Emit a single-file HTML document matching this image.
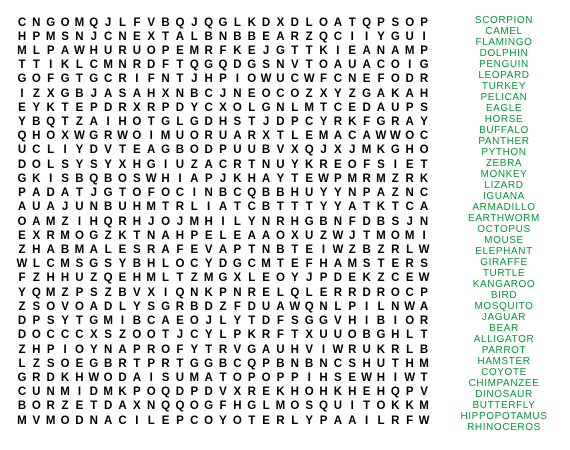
<!DOCTYPE html><html><head><style>
body{margin:0;width:570px;height:450px;background:#fff;position:relative;overflow:hidden;font-family:"Liberation Sans",Arial,sans-serif}
#g{position:absolute;left:14.8px;top:15.5px}
.r{display:flex;height:14.23px;line-height:14.23px}
.r span{width:14.36px;text-align:center;font-weight:bold;font-size:11.5px;color:#000}
#w{position:absolute;left:454px;width:100px;top:14.5px;text-align:center;color:#009933;font-size:10px;letter-spacing:0.6px}
#w div{height:11px;line-height:11px}
</style></head><body>
<div id="g"></div>
<div id="w"></div>
<script>
var rows="CNGOMQJLFVBQJQGLKDXDLOATQPSOP HPMSNJCNEXTALBNBBEARZQCIIYGUI MLPAWHURUOPEMRFKEJGTTKIEANAMP TTIKLCMNRDFTQGQDGSNVTOAUACOIG GOFGTGCRIFNTJHPIOWUCWFCNEFODR IZXGBJASAHXNBCJNEOCOZXYZGAKAH EYKTEPDRXRPDYCXOLGNLMTCEDAUPS YBQTZAIHOTGLGDHSTJDPCYRKFGRAY QHOXWGRWOIMUORUARXTLEMACAWWOC UCLIYDVTEAGBODPUUBVXQJXJMKGHO DOLSYSYXHGIUZACRTNUYKREOFSIET GKISBQBOSWHIAPJKHAYTEWPMRMZRK PADATJGTOFOCINBCQBBHUYYNPAZNC AUAJUNBUHMTRLIATCBTTTYYATKTCA OAMZIHQRHJOJMHILYNRHGBNFDBSJN EXRMOGZKTNAHPELEAAOXUZWJTMOMI ZHABMALESRAFEVAPTNBTEIWZBZRLW WLCMSGSYBHLOCYDGCMTEFHAMSTERS FZHHUZQEHMLTZMGXLEOYJPDEKZCEW YQMZPSZBVXIQNKPNRELQLERRDROCP ZSOVOADLYSGRBDZFDUAWQNLPILNWA DPSYTGMIBCAEOJLYTDFSGGVHIBIOR DOCCCXSZOOTJCYLPKRFTXUUOBGHLT ZHPIOYNAPROFYTRVGAUHVIWRUKRLB LZSOEGBRTPRTGGBCQPBNBNCSHUTHM GRDKHWODAISUMATOPOPPIHSEWHIWT CUNMIDMKPOQDPDVXREKHOHKHEHQPV BORZETDAXNQQOGFHGLMOSQUITOKKM MVMODNACILEPCOYOTERLYPAAILRFW".split(" ");
var h="";rows.forEach(function(r){h+='<div class="r">';for(var i=0;i<r.length;i++)h+='<span>'+r[i]+'</span>';h+='</div>';});
document.getElementById("g").innerHTML=h;
var w="SCORPION CAMEL FLAMINGO DOLPHIN PENGUIN LEOPARD TURKEY PELICAN EAGLE HORSE BUFFALO PANTHER PYTHON ZEBRA MONKEY LIZARD IGUANA ARMADILLO EARTHWORM OCTOPUS MOUSE ELEPHANT GIRAFFE TURTLE KANGAROO BIRD MOSQUITO JAGUAR BEAR ALLIGATOR PARROT HAMSTER COYOTE CHIMPANZEE DINOSAUR BUTTERFLY HIPPOPOTAMUS RHINOCEROS".split(" ");
document.getElementById("w").innerHTML=w.map(function(x){return"<div>"+x+"</div>"}).join("");
</script>
</body></html>
